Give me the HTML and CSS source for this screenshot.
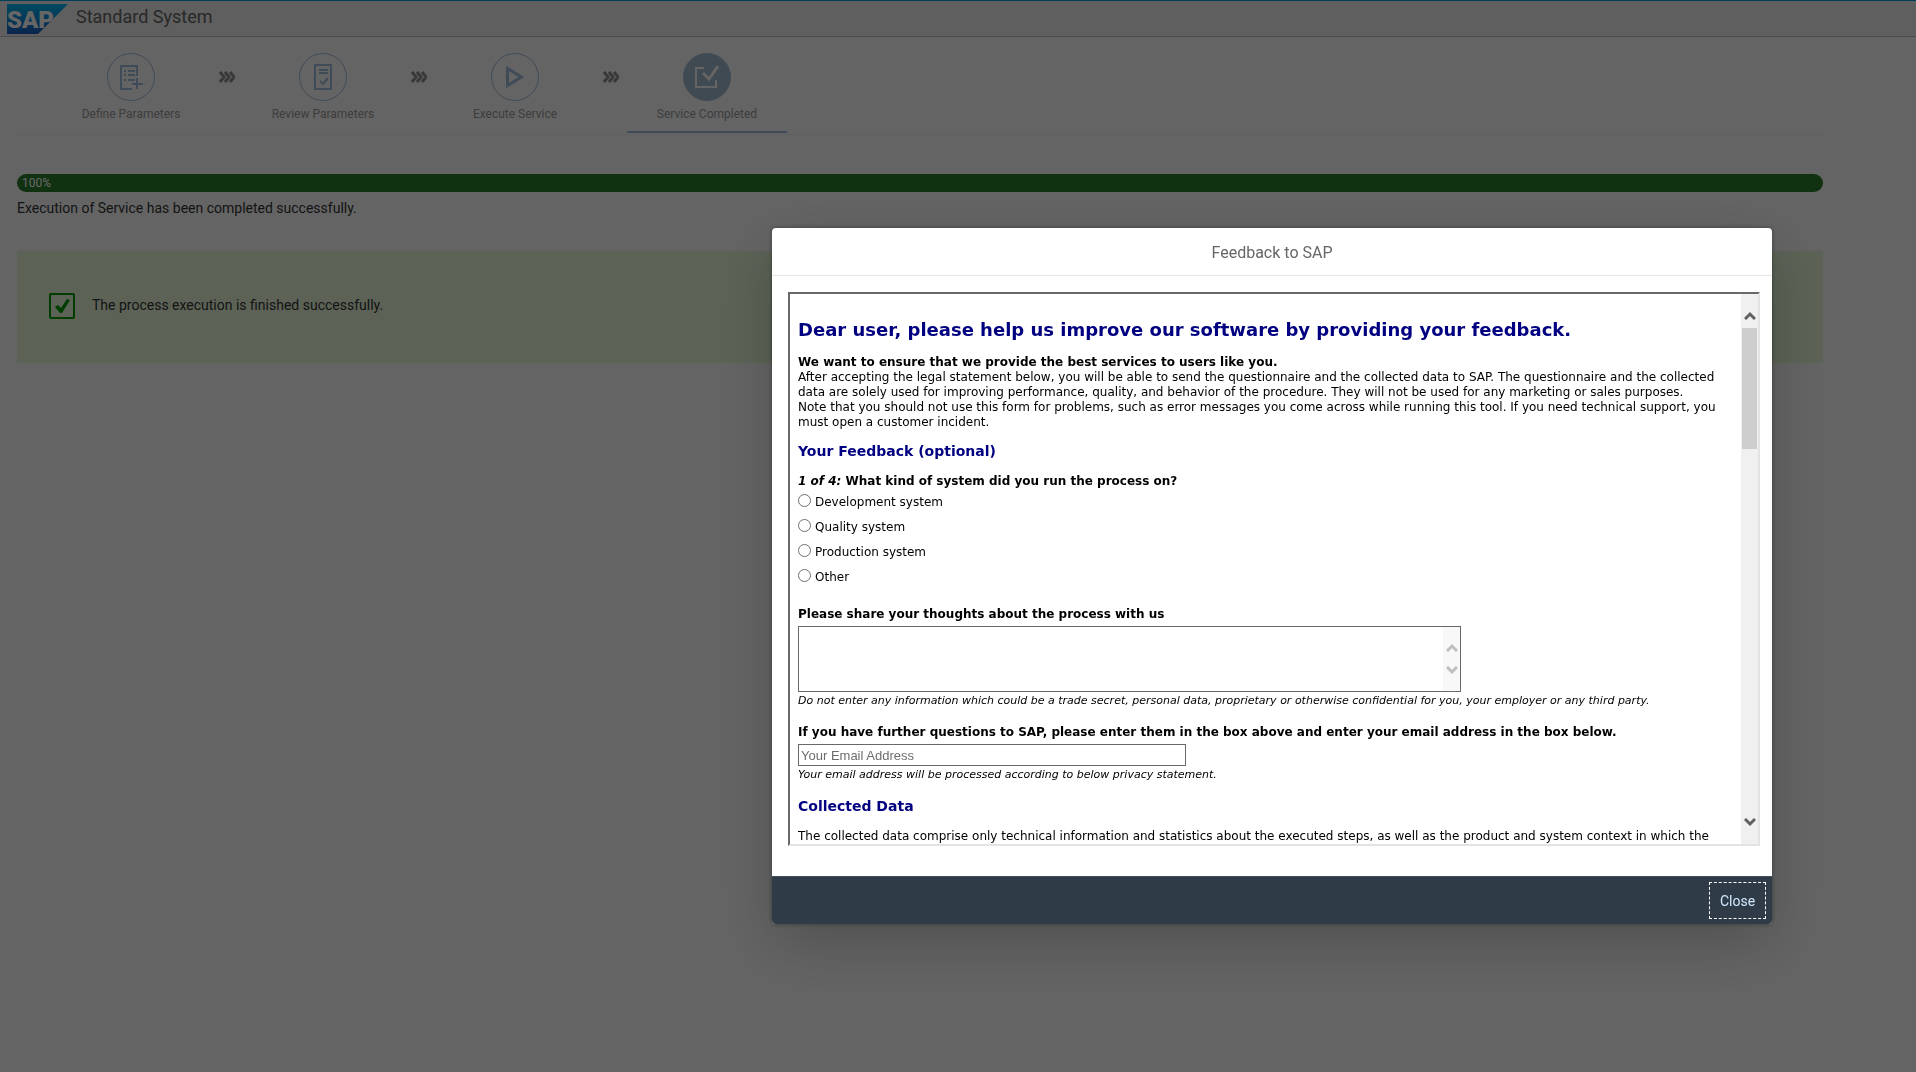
FILE: index.html
```html
<!DOCTYPE html>
<html lang="en">
<head>
    <meta charset="utf-8">
    <title>Standard System</title>
    <link rel="stylesheet" href="styles.css">
</head>
<body>
    <header class="shell-header">
        <svg class="logo" viewBox="0 0 61 30" role="img" aria-label="SAP">
            <defs>
                <linearGradient id="logoFill" x1="0" y1="0" x2="0" y2="1">
                    <stop offset="0" stop-color="#00b8f1"/>
                    <stop offset="1" stop-color="#1d5bbf"/>
                </linearGradient>
            </defs>
            <path d="M0 0H61L31 30H0Z" fill="url(#logoFill)"/>
            <text x="0" y="24" class="logo-text">SAP</text>
        </svg>
        <h1>Standard System</h1>
    </header>

    <main class="page">
        <nav class="steps">
            <a href="#" class="step">
                <span class="step-circle">
                    <svg viewBox="0 0 24 26" width="24" height="26">
                        <path d="M18 12V2H2V25H13" fill="none" stroke="currentColor" stroke-width="2"/>
                        <path d="M5 7h2M9 7h7M5 11h2M9 11h7M5 16h2M9 16h7" stroke="currentColor" stroke-width="2"/>
                        <path d="M18 14v11M13 20h11" stroke="currentColor" stroke-width="2"/>
                    </svg>
                </span>
                Define Parameters
            </a>
            <span class="chevrons"><svg viewBox="0 0 16 12" width="16" height="12"><path d="M1 1l4 5-4 5M6 1l4 5-4 5M11 1l4 5-4 5"/></svg></span>
            <a href="#" class="step">
                <span class="step-circle">
                    <svg viewBox="0 0 18 26" width="18" height="26">
                        <rect x="1" y="1" width="16" height="24" fill="none" stroke="currentColor" stroke-width="2"/>
                        <path d="M5 6h9M5 9h9" stroke="currentColor" stroke-width="2"/>
                        <path d="M6 17l3 3 5-6" fill="none" stroke="currentColor" stroke-width="2"/>
                    </svg>
                </span>
                Review Parameters
            </a>
            <span class="chevrons"><svg viewBox="0 0 16 12" width="16" height="12"><path d="M1 1l4 5-4 5M6 1l4 5-4 5M11 1l4 5-4 5"/></svg></span>
            <a href="#" class="step">
                <span class="step-circle">
                    <svg viewBox="0 0 18 22" width="18" height="22">
                        <path d="M1.500 2.500V19.500L15.500 11Z" fill="none" stroke="currentColor" stroke-width="3"/>
                    </svg>
                </span>
                Execute Service
            </a>
            <span class="chevrons"><svg viewBox="0 0 16 12" width="16" height="12"><path d="M1 1l4 5-4 5M6 1l4 5-4 5M11 1l4 5-4 5"/></svg></span>
            <a href="#" class="step selected">
                <span class="step-circle">
                    <svg viewBox="0 0 24 24" width="24" height="24">
                        <path d="M9 3H1V22H21V15" fill="none" stroke="currentColor" stroke-width="2"/>
                        <path d="M8 8l6 6L23 1" fill="none" stroke="currentColor" stroke-width="3"/>
                    </svg>
                </span>
                Service Completed
            </a>
        </nav>

        <div class="progress">100%</div>
        <p class="progress-text">Execution of Service has been completed successfully.</p>

        <div class="message">
            <svg viewBox="0 0 26 26" width="26" height="26">
                <rect x="1" y="1" width="24" height="24" rx="1" fill="none" stroke="#009800" stroke-width="2"/>
                <path d="M6 14l3-2 3 3 6-9 3 1-8 13h-2z" fill="#009800"/>
            </svg>
            <p>The process execution is finished successfully.</p>
        </div>
    </main>

    <div class="overlay">
        <section class="dialog" role="dialog" aria-labelledby="dialogTitle">
            <h2 class="dialog-title" id="dialogTitle">Feedback to SAP</h2>
            <div class="dialog-body">
                <div class="frame">
                    <form class="survey">
                        <h2>Dear user, please help us improve our software by providing your feedback.</h2>
                        <p><b>We want to ensure that we provide the best services to users like you.</b><br>
                        After accepting the legal statement below, you will be able to send the questionnaire and the collected data to SAP. The questionnaire and the collected data are solely used for improving performance, quality, and behavior of the procedure. They will not be used for any marketing or sales purposes.<br>
                        Note that you should not use this form for problems, such as error messages you come across while running this tool. If you need technical support, you must open a customer incident.</p>

                        <h3>Your Feedback (optional)</h3>
                        <fieldset>
                            <legend><i>1 of 4:</i> What kind of system did you run the process on?</legend>
                            <label class="option"><input type="radio" name="system" value="dev">Development system</label>
                            <label class="option"><input type="radio" name="system" value="quality">Quality system</label>
                            <label class="option"><input type="radio" name="system" value="prod">Production system</label>
                            <label class="option"><input type="radio" name="system" value="other">Other</label>
                        </fieldset>

                        <label class="question" for="thoughts">Please share your thoughts about the process with us</label>
                        <div class="textarea-box">
                            <textarea id="thoughts" name="thoughts"></textarea>
                            <div class="textarea-scroll">
                                <svg viewBox="0 0 12 9" width="12" height="9"><path d="M1 8l5-5 5 5"/></svg>
                                <svg viewBox="0 0 12 9" width="12" height="9"><path d="M1 1l5 5 5-5"/></svg>
                            </div>
                        </div>
                        <p class="hint">Do not enter any information which could be a trade secret, personal data, proprietary or otherwise confidential for you, your employer or any third party.</p>

                        <label class="question" for="email">If you have further questions to SAP, please enter them in the box above and enter your email address in the box below.</label>
                        <input type="email" id="email" name="email" placeholder="Your Email Address">
                        <p class="hint">Your email address will be processed according to below privacy statement.</p>

                        <h3 class="section">Collected Data</h3>
                        <p>The collected data comprise only technical information and statistics about the executed steps, as well as the product and system context in which the</p>
                    </form>
                    <div class="scrollbar">
                        <svg viewBox="0 0 12 9" width="12" height="9"><path d="M1 8l5-5 5 5"/></svg>
                        <div class="track"><div class="thumb"></div></div>
                        <svg viewBox="0 0 12 9" width="12" height="9"><path d="M1 1l5 5 5-5"/></svg>
                    </div>
                </div>
            </div>
            <footer class="dialog-footer">
                <button type="button" class="close-button">Close</button>
            </footer>
        </section>
    </div>
</body>
</html>
```
FILE: styles.css
```css
* {
    box-sizing: border-box;
}

body {
    margin: 0;
    min-height: 100vh;
    background-color: #fafafa;
    color: #333;
    font-family: Roboto, "Liberation Sans", sans-serif;
    font-size: 14px;
}

h1, h2, h3, p {
    margin: 0;
}

.shell-header {
    display: flex;
    align-items: flex-start;
    gap: 8px;
    height: 37px;
    padding: 3px 0 0 7px;
    border-top: 1px solid #009de0;
    border-bottom: 1px solid #bfbfbf;
    background-color: #ededed;
}

.shell-header h1 {
    font-size: 18px;
    font-weight: normal;
    line-height: 26px;
    color: #666;
}

.logo {
    width: 61px;
    height: 30px;
}

.logo-text {
    font-family: Roboto, "Liberation Sans", sans-serif;
    font-size: 24px;
    font-weight: 900;
    fill: #fff;
}

.page {
    padding: 0 93px 0 17px;
}

/* wizard steps */
.steps {
    display: flex;
    height: 98px;
    padding: 16px 34px 0;
    border-bottom: 1px solid #f0f0f0;
}

.step {
    width: 160px;
    height: 80px;
    display: flex;
    flex-direction: column;
    align-items: center;
    gap: 4px;
    font-size: 12px;
    line-height: 18px;
    color: #999;
    text-decoration: none;
}

.step-circle {
    display: flex;
    align-items: center;
    justify-content: center;
    width: 48px;
    height: 48px;
    border: 1px solid #a0bbd4;
    border-radius: 50%;
    color: #9fbcd6;
}

.step.selected {
    border-bottom: 2px solid #9fbcd6;
}

.selected .step-circle {
    background-color: #a0b9cf;
    color: #fafafa;
}

.chevrons {
    width: 32px;
    height: 48px;
    display: flex;
    align-items: center;
    justify-content: center;
}

.chevrons path {
    fill: none;
    stroke: #8c8c8c;
    stroke-width: 3;
}

.progress {
    height: 18px;
    margin-top: 39px;
    padding-left: 5px;
    border-radius: 9px;
    background-color: #2b7d2b;
    color: #fff;
    font-size: 12px;
    line-height: 18px;
}

.progress-text {
    margin-top: 6px;
    line-height: 20px;
}

.message {
    display: flex;
    align-items: center;
    gap: 17px;
    height: 112px;
    margin-top: 33px;
    padding: 0 32px 2px;
    background-color: #e6f5d7;
}

.message p {
    padding-bottom: 2px;
}

/* dialog */
.overlay {
    position: fixed;
    inset: 0;
    display: flex;
    justify-content: flex-end;
    align-items: flex-start;
    padding: 228px 144px 0 0;
    background-color: rgba(0, 0, 0, 0.6);
}

.dialog {
    width: 1000px;
    border-radius: 4px;
    background-color: #fff;
    box-shadow: 0 20px 60px rgba(0, 0, 0, 0.2), 0 0 4px rgba(0, 0, 0, 0.4);
    overflow: hidden;
}

.dialog-title {
    padding-top: 2px;
    border-bottom: 1px solid #e5e5e5;
    font-size: 16px;
    font-weight: normal;
    line-height: 45px;
    text-align: center;
    color: #666;
}

.dialog-body {
    padding: 16px 12px 30px 16px;
}

.frame {
    display: flex;
    height: 554px;
    border: 2px solid;
    border-color: #696969 #e3e3e3 #e3e3e3 #696969;
}

.survey {
    flex: 1;
    padding: 25px 8px 0;
    overflow: hidden;
    color: #000;
    font-family: "DejaVu Sans", sans-serif;
    font-size: 12px;
    line-height: 15px;
}

.survey h2 {
    margin-bottom: 14px;
    font-size: 18px;
    line-height: 22px;
    color: #000080;
}

.survey h3 {
    margin: 12px 0 14px;
    font-size: 14px;
    line-height: 18px;
    color: #000080;
}

fieldset {
    margin: 0;
    padding: 0;
    border: none;
}

legend {
    padding: 0;
    margin-bottom: 1px;
    font-weight: bold;
}

.option {
    display: flex;
    align-items: center;
    gap: 4px;
    height: 25px;
}

.option input {
    appearance: none;
    width: 13px;
    height: 13px;
    margin: 0 0 5px;
    border: 1px solid #707070;
    border-radius: 50%;
    background-color: #fff;
}

.question {
    display: block;
    margin: 17px 0 4px;
    font-weight: bold;
}

.textarea-box {
    position: relative;
    width: 663px;
    height: 66px;
}

.textarea-box textarea {
    display: block;
    width: 100%;
    height: 100%;
    padding: 2px 20px 2px 2px;
    border: 1px solid #696969;
    resize: none;
    overflow: hidden;
}

.textarea-scroll {
    position: absolute;
    top: 1px;
    right: 1px;
    bottom: 1px;
    width: 17px;
    display: flex;
    flex-direction: column;
    align-items: center;
    justify-content: center;
    gap: 14px;
    background-color: #f8f8f8;
}

.textarea-scroll path {
    fill: none;
    stroke: #bfbfbf;
    stroke-width: 3;
}

#email {
    display: block;
    width: 388px;
    height: 22px;
    padding: 0 2px;
    border: 1px solid #696969;
    font-family: "Liberation Sans", sans-serif;
    font-size: 13px;
}

#email::placeholder {
    color: #6d6d6d;
}

.hint {
    margin-top: 2px;
    font-size: 11px;
    line-height: 14px;
    font-style: italic;
}

.survey .section {
    margin-top: 15px;
}

.scrollbar {
    display: flex;
    flex-direction: column;
    align-items: center;
    gap: 8px;
    width: 17px;
    padding: 17px 0;
    background-color: #f0f0f0;
}

.scrollbar path {
    fill: none;
    stroke: #606060;
    stroke-width: 3;
}

.track {
    flex: 1;
}

.thumb {
    width: 15px;
    height: 121px;
    background-color: #cdcdcd;
}

.dialog-footer {
    display: flex;
    align-items: center;
    justify-content: flex-end;
    height: 48px;
    padding-right: 6px;
    border-top: 1px solid #3f5161;
    background-color: #2f3c48;
}

.close-button {
    width: 57px;
    height: 37px;
    padding: 0;
    border: 1px dashed #fff;
    background-color: transparent;
    color: #d1e8ff;
    font-family: inherit;
    font-size: 14px;
}
```
